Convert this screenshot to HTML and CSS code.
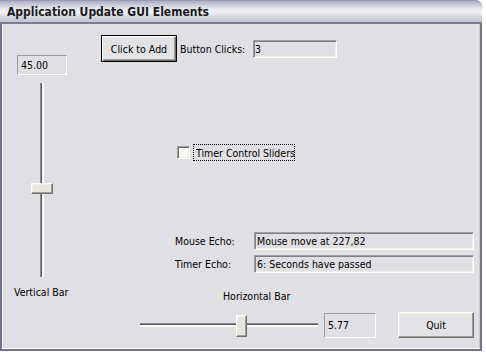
FILE: index.html
```html
<!DOCTYPE html>
<html>
<head>
<meta charset="utf-8">
<link rel="stylesheet" href="styles.css">
</head>
<body>
<div class="window">
  <div class="titlebar"><span class="title">Application Update GUI Elements</span></div>
  <div class="client">
    <div class="left">
      <div class="readout readout-v">45.00</div>
      <div class="vslider"><div class="vthumb"></div></div>
      <div class="caption caption-v">Vertical Bar</div>
    </div>
    <div class="right">
      <div class="row row-clicks">
        <div class="btn btn-default btn-add">Click to Add</div>
        <span class="label label-clicks">Button Clicks:</span>
        <div class="field field-clicks">3</div>
      </div>
      <div class="row row-check">
        <div class="checkbox"></div>
        <span class="check-label">Timer Control Sliders</span>
      </div>
      <div class="row row-mouse">
        <span class="label label-echo">Mouse Echo:</span>
        <div class="field field-echo">Mouse move at 227,82</div>
      </div>
      <div class="row row-timer">
        <span class="label label-echo">Timer Echo:</span>
        <div class="field field-echo">6: Seconds have passed</div>
      </div>
      <div class="caption caption-h">Horizontal Bar</div>
      <div class="row row-bottom">
        <div class="hslider"><div class="hthumb"></div></div>
        <div class="readout readout-h">5.77</div>
        <div class="btn btn-quit">Quit</div>
      </div>
    </div>
  </div>
</div>
</body>
</html>
```
FILE: styles.css
```css
html, body {
  margin: 0;
  padding: 0;
  background: #ffffff;
}
body {
  font-family: "DejaVu Sans Condensed", "DejaVu Sans", sans-serif;
  font-size: 10.5px;
  color: #000;
}
.window {
  width: 482px;
  display: flex;
  flex-direction: column;
}
.titlebar {
  height: 22px;
  border-top-right-radius: 7px;
  border-bottom: 2px solid #7c7c96;
  box-shadow: inset 0 1px #9a9ab2;
  background: linear-gradient(to bottom, #a6a6bc 0px, #bcbccf 3px, #e2e2ea 8px, #f2f2f6 12px, #dadae4 16px, #c4c4d4 22px);
  display: flex;
  align-items: center;
}
.title {
  margin-left: 7px;
  margin-top: 1px;
  font-family: "DejaVu Sans Condensed", "DejaVu Sans", sans-serif;
  font-weight: bold;
  font-size: 12px;
  color: #1a1a1a;
}
.client {
  box-sizing: border-box;
  height: 327px;
  background: #e0dfe3;
  border: 2px solid #72728c;
  border-top: none;
  box-shadow: inset 1px 0 #ffffff, inset 0 -1px #ffffff, inset -1px 0 #c8c8d4;
  display: flex;
}
.left {
  width: 96px;
  display: flex;
  flex-direction: column;
  align-items: flex-start;
}
.right {
  flex: 1;
  display: flex;
  flex-direction: column;
  align-items: flex-start;
}
.readout {
  box-sizing: border-box;
  border: 1px solid;
  border-color: #9d9da1 #ffffff #ffffff #9d9da1;
  padding-left: 3px;
  display: flex;
  align-items: center;
}
.readout-v {
  margin-top: 31px;
  margin-left: 15px;
  width: 50px;
  height: 20px;
}
.vslider {
  position: relative;
  margin-top: 8px;
  margin-left: 38px;
  box-sizing: border-box;
  width: 4px;
  height: 194px;
  border-left: 1px solid #8c8c90;
  border-right: 2px solid #fbfaf2;
  background: #55555a;
}
.vthumb {
  position: absolute;
  left: -10px;
  top: 100px;
  box-sizing: border-box;
  width: 22px;
  height: 11px;
  background: #e6e5e0;
  border: 1px solid;
  border-color: #ffffff #716f64 #716f64 #ffffff;
  box-shadow: inset -1px -1px #9d9da1, inset 1px 1px #f1efe2;
}
.caption {
  line-height: 13px;
  white-space: nowrap;
}
.caption-v {
  margin-top: 9px;
  margin-left: 12px;
}
.row {
  display: flex;
  align-items: center;
}
.btn {
  box-sizing: border-box;
  background: #e3e2e4;
  display: flex;
  align-items: center;
  justify-content: center;
  border: 1px solid;
  border-color: #ffffff #716f64 #716f64 #ffffff;
  box-shadow: inset -1px -1px #9d9da1, inset 1px 1px #f1efe2;
}
.btn-default {
  border: 1px solid #000;
  box-shadow: inset 1px 1px #ffffff, inset -1px -1px #716f64, inset -2px -2px #9d9da1;
}
.row-clicks {
  margin-top: 11px;
}
.btn-add {
  margin-left: 3px;
  width: 76px;
  height: 27px;
}
.label-clicks {
  margin-left: 3px;
  width: 73px;
  white-space: nowrap;
}
.field {
  box-sizing: border-box;
  border: 1px solid;
  border-color: #9d9da1 #ffffff #ffffff #9d9da1;
  box-shadow: inset 1px 1px #808084, inset -1px -1px #f1efe2;
  padding-left: 2px;
  display: flex;
  align-items: center;
  white-space: nowrap;
}
.field-clicks {
  width: 84px;
  height: 18px;
  padding-left: 1px;
}
.row-check {
  margin-top: 82px;
  margin-left: 79px;
}
.checkbox {
  box-sizing: border-box;
  width: 13px;
  height: 13px;
  background: #fbfbf8;
  border: 1px solid;
  border-color: #9d9da1 #ffffff #ffffff #9d9da1;
  box-shadow: inset 1px 1px #716f64, inset -1px -1px #f1efe2;
}
.check-label {
  box-sizing: border-box;
  margin-left: 3px;
  width: 102px;
  height: 17px;
  padding-left: 2px;
  border: 1px dotted #000;
  display: flex;
  align-items: center;
  white-space: nowrap;
}
.row-mouse {
  margin-top: 71px;
  margin-left: 77px;
}
.row-timer {
  margin-top: 5px;
  margin-left: 77px;
}
.label-echo {
  width: 79px;
  white-space: nowrap;
}
.field-echo {
  width: 220px;
  height: 18px;
}
.caption-h {
  margin-top: 17px;
  margin-left: 125px;
}
.row-bottom {
  margin-top: 9px;
  margin-left: 42px;
}
.hslider {
  position: relative;
  box-sizing: border-box;
  width: 178px;
  height: 4px;
  border-top: 1px solid #8c8c90;
  border-bottom: 2px solid #fbfaf2;
  background: #55555a;
}
.hthumb {
  position: absolute;
  left: 96px;
  top: -9px;
  box-sizing: border-box;
  width: 11px;
  height: 22px;
  background: #e6e5e0;
  border: 1px solid;
  border-color: #ffffff #716f64 #716f64 #ffffff;
  box-shadow: inset -1px -1px #9d9da1, inset 1px 1px #f1efe2;
}
.readout-h {
  margin-left: 6px;
  width: 52px;
  height: 25px;
}
.btn-quit {
  margin-left: 22px;
  width: 76px;
  height: 26px;
}
```
